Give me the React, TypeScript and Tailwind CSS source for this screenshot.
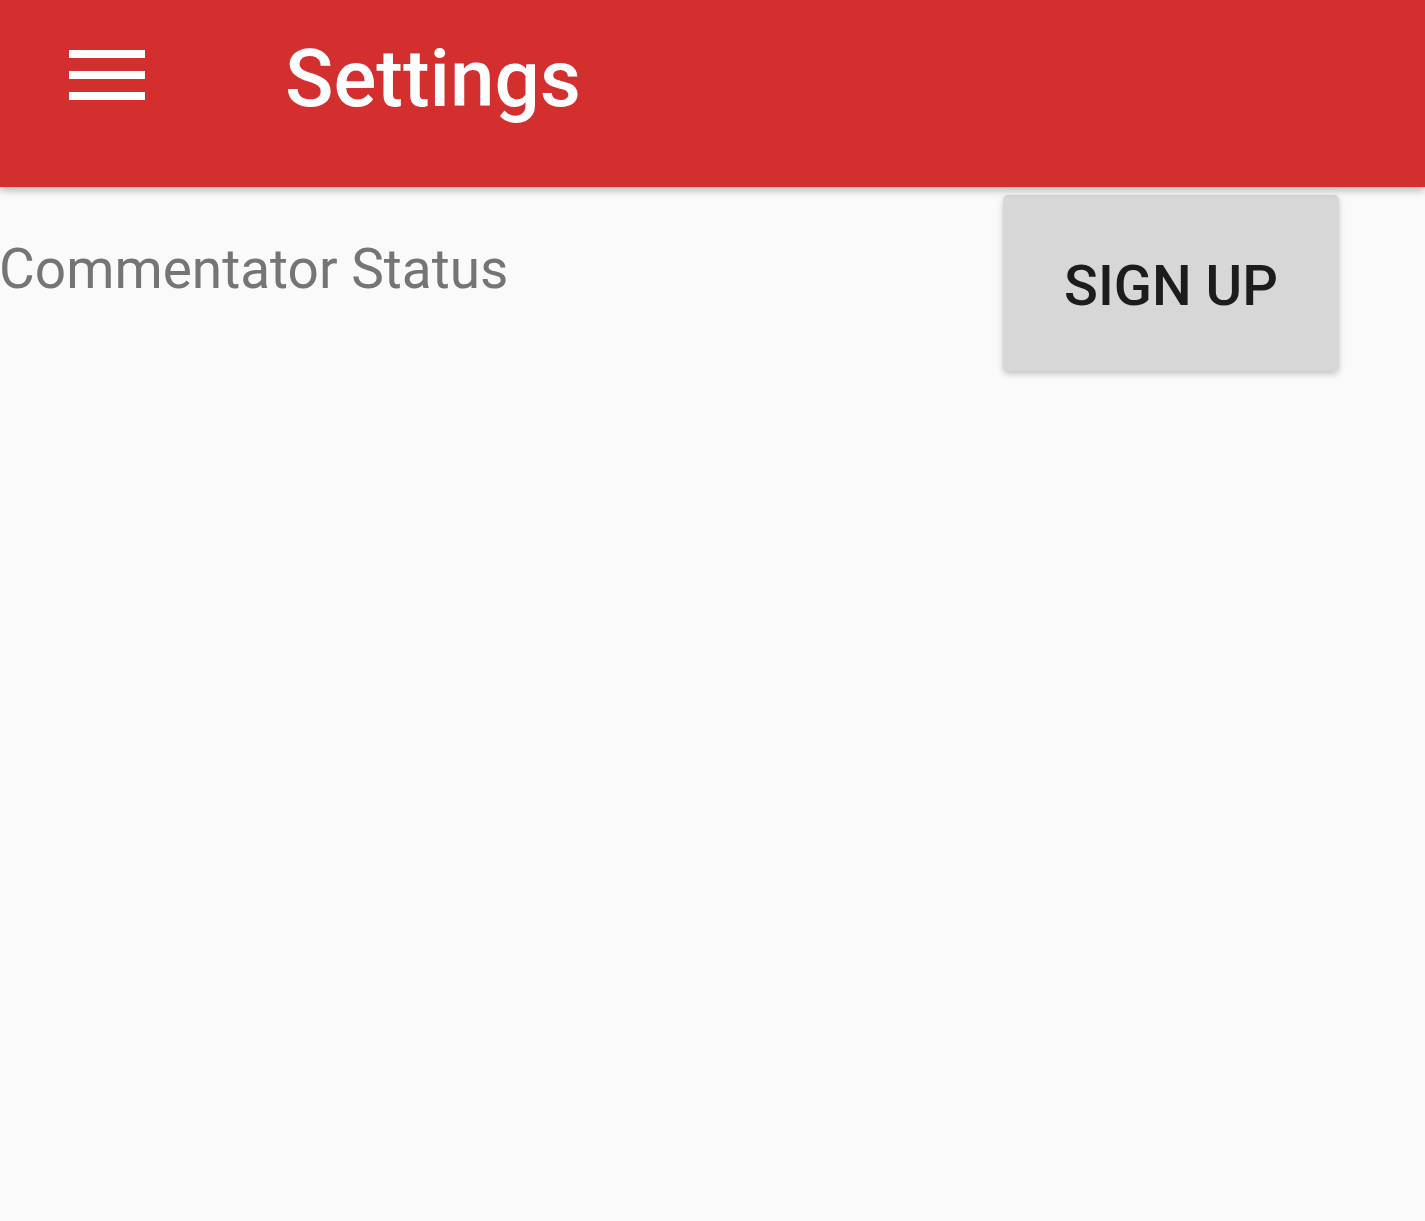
export default function App() {
  return (
    <div className="min-h-[1221px] w-full bg-[#fafafa] font-['Roboto',sans-serif]">
      {/* App bar */}
      <header className="relative z-10 flex h-[187px] items-center bg-[#d32f2f] shadow-[0_3px_8px_rgba(0,0,0,0.3)]">
        <div className="ml-[69px] flex w-[76px] -translate-y-[19px] flex-col gap-[13px]">
          <span className="block h-[8px] bg-white" />
          <span className="block h-[8px] bg-white" />
          <span className="block h-[8px] bg-white" />
        </div>
        <h1 className="ml-[140px] -translate-y-[15px] text-[80px] font-medium leading-none text-white">Settings</h1>
      </header>

      {/* Content */}
      <div className="flex items-start justify-between">
        <p className="-ml-[1px] mt-[49px] text-[55px] leading-[66px] text-[#757575]">Commentator Status</p>
        <button className="mr-[86px] mt-[8px] flex h-[176px] w-[336px] items-center justify-center rounded-[5px] bg-[#d6d7d6] pt-[6px] text-[56px] font-medium text-[#1c1c1c] shadow-[0_3px_6px_rgba(0,0,0,0.22)]">
          SIGN UP
        </button>
      </div>
    </div>
  )
}
